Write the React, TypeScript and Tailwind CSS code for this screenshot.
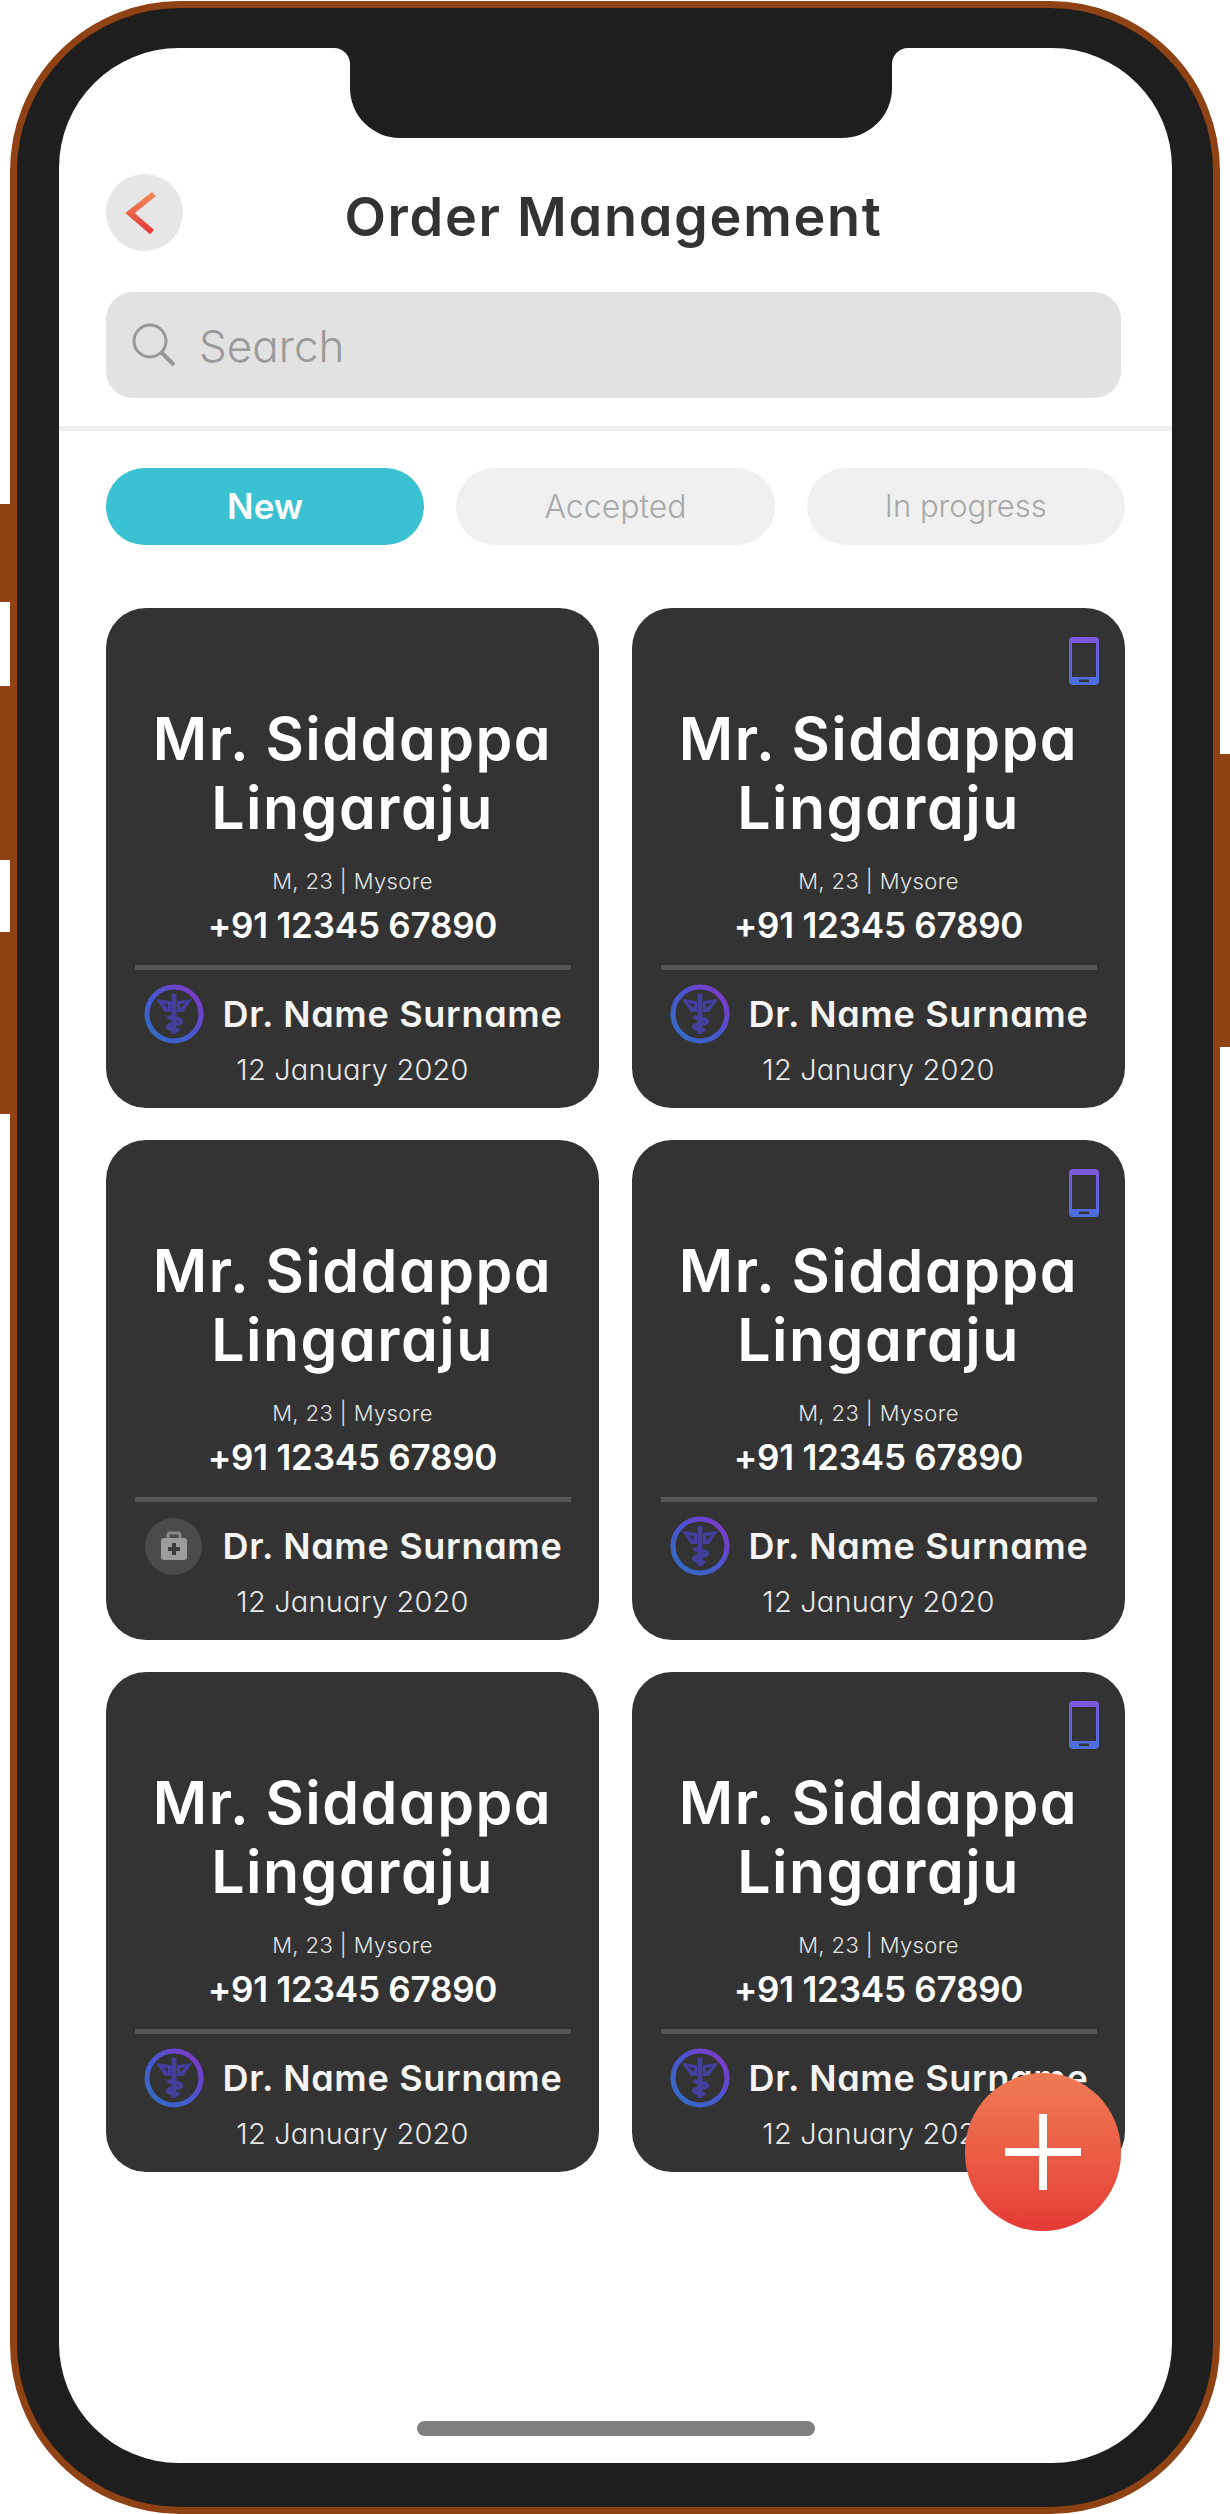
import React from 'react';

const orders = [
  { id: 1, viaPhone: false, badge: 'ring' },
  { id: 2, viaPhone: true, badge: 'ring' },
  { id: 3, viaPhone: false, badge: 'kit' },
  { id: 4, viaPhone: true, badge: 'ring' },
  { id: 5, viaPhone: false, badge: 'ring' },
  { id: 6, viaPhone: true, badge: 'ring' },
];

const Caduceus: React.FC<{ gid: string }> = ({ gid }) => (
  <svg width="60" height="60" viewBox="0 0 60 60" fill="none">
    <defs>
      <linearGradient id={gid} x1="0" y1="1" x2="1" y2="0">
        <stop offset="0" stopColor="#2f6fc0" />
        <stop offset="0.5" stopColor="#4a55d0" />
        <stop offset="1" stopColor="#8a35c8" />
      </linearGradient>
    </defs>
    <circle cx="30" cy="30" r="27" stroke={`url(#${gid})`} strokeWidth="5" />
    {/* wings */}
    <path d="M12 15 L27 17 L27 28 L21 28 Z" fill="#453f9c" />
    <path d="M48 15 L33 17 L33 28 L39 28 Z" fill="#453f9c" />
    <path d="M19 19.5 L24 20 L24 24 Z M41 19.5 L36 20 L36 24 Z" fill="#333333" />
    {/* staff and snake */}
    <path d="M30 10 L30 50" stroke="#453f9c" strokeWidth="5" />
    <path d="M24 32 C26 36 35 33 37 37 C38 41 24 39 24 43 C25 46 33 45 35 47" stroke="#453f9c" strokeWidth="4" />
  </svg>
);

const KitBadge: React.FC = () => (
  <div className="flex h-[57px] w-[57px] items-center justify-center rounded-full bg-[#4b4b4b]">
    <svg width="28" height="30" viewBox="0 0 28 30" fill="none">
      <path d="M8 8 V4 a2 2 0 0 1 2 -2 h8 a2 2 0 0 1 2 2 V8" stroke="#8a8a8a" strokeWidth="3" />
      <rect x="1" y="7" width="26" height="22" rx="3" fill="#9c9c9c" />
      <path d="M14 12 V24 M8 18 H20" stroke="#3c3c3c" strokeWidth="4" />
    </svg>
  </div>
);

const PhoneIcon: React.FC<{ gid: string }> = ({ gid }) => (
  <svg width="32" height="50" viewBox="0 0 32 50" fill="none" className="absolute top-[28px] right-[25px]">
    <defs>
      <linearGradient id={gid} x1="0" y1="0" x2="0" y2="1">
        <stop offset="0" stopColor="#7d58dc" />
        <stop offset="1" stopColor="#4a70dc" />
      </linearGradient>
    </defs>
    <path
      fillRule="evenodd"
      d="M5 1 H27 a4 4 0 0 1 4 4 V45 a4 4 0 0 1 -4 4 H5 a4 4 0 0 1 -4 -4 V5 a4 4 0 0 1 4 -4 Z M4 7 V41 H28 V7 Z M11 43.5 V46 H21 V43.5 Z"
      fill={`url(#${gid})`}
    />
  </svg>
);

const OrderCard: React.FC<{ id: number; viaPhone: boolean; badge: string }> = ({ id, viaPhone, badge }) => (
  <div className="relative flex h-[500px] flex-col items-center rounded-[40px] bg-[#333333] pt-[96px] text-white">
    {viaPhone && <PhoneIcon gid={`phone-${id}`} />}
    <p className="text-center text-[59px] leading-[69px] font-semibold tracking-[1.5px] whitespace-nowrap">
      Mr. Siddappa
      <br />
      Lingaraju
    </p>
    <p className="mt-[27px] text-[22px] leading-[24px] font-light tracking-[0.4px] text-[#e4e4e4]">M, 23 | Mysore</p>
    <p className="mt-[14px] text-[35px] leading-[36px] font-semibold tracking-[-0.2px]">+91 12345 67890</p>
    <div className="mt-[22px] h-[5px] w-[436px] bg-[#555555]" />
    <div className="mt-[14px] flex h-[60px] w-[436px] items-center pl-[9px]">
      <div className="flex h-[60px] w-[60px] shrink-0 items-center justify-center">
        {badge === 'ring' ? <Caduceus gid={`staff-${id}`} /> : <KitBadge />}
      </div>
      <span className="ml-[19px] text-[36px] leading-[40px] font-semibold tracking-[0.7px] whitespace-nowrap text-[#f4f4f4]">Dr. Name Surname</span>
    </div>
    <p className="mt-[11px] text-[29px] leading-[30px] font-light tracking-[0.2px] text-[#e8e8e8]">12 January 2020</p>
  </div>
);

export default function App() {
  return (
    <div className="relative h-[2514px] w-[1230px] overflow-hidden bg-white font-['Inter','Liberation_Sans',sans-serif] [font-feature-settings:'cv11']">
      {/* side buttons */}
      <div className="absolute top-[504px] left-0 h-[98px] w-[14px] bg-[#8f4315]" />
      <div className="absolute top-[686px] left-0 h-[174px] w-[14px] bg-[#8f4315]" />
      <div className="absolute top-[932px] left-0 h-[182px] w-[14px] bg-[#8f4315]" />
      <div className="absolute top-[754px] right-0 h-[293px] w-[14px] bg-[#8f4315]" />

      <div className="relative mt-px ml-[10px] h-[2513px] w-[1210px] rounded-[170px] border-[7px] border-[#8f4315] bg-[#1e1e1e] pt-[40px] pr-[41px] pb-[44px] pl-[42px]">
        <div className="relative flex h-full flex-col overflow-hidden rounded-[120px] bg-white">
          {/* notch */}
          <div className="absolute top-0 left-[291px] h-[90px] w-[542px] rounded-b-[50px] bg-[#1e1e1e]" />
          <div className="absolute top-0 left-[275px] h-[16px] w-[16px] bg-[#1e1e1e]">
            <div className="h-full w-full rounded-tr-[16px] bg-white" />
          </div>
          <div className="absolute top-0 left-[833px] h-[16px] w-[16px] bg-[#1e1e1e]">
            <div className="h-full w-full rounded-tl-[16px] bg-white" />
          </div>

          <div className="mt-[125px] mr-[51px] ml-[47px] grid h-[79px] grid-cols-[77px_1fr_77px] items-center">
            <div className="flex h-[77px] w-[77px] items-center justify-center rounded-full bg-[#e6e6e6]">
              <svg width="34" height="44" viewBox="0 0 34 44" fill="none" className="-ml-[6px]">
                <defs>
                  <linearGradient id="back" x1="0" y1="0" x2="0" y2="1">
                    <stop offset="0" stopColor="#f08a5a" />
                    <stop offset="1" stopColor="#e53935" />
                  </linearGradient>
                </defs>
                <path d="M29 3 L5 22 L27 41" stroke="url(#back)" strokeWidth="6" />
              </svg>
            </div>
            <h1 className="pt-[9px] text-center text-[54px] leading-[60px] font-semibold tracking-[1.7px] whitespace-nowrap text-[#333333]">Order Management</h1>
          </div>

          <div className="mt-[40px] mr-[51px] ml-[47px] flex h-[106px] items-center rounded-[27px] bg-[#e2e2e2] pl-[26px]">
            <svg width="44" height="44" viewBox="0 0 44 44" fill="none" stroke="#989898">
              <circle cx="18" cy="18" r="16" strokeWidth="3" />
              <path d="M30 30 L42 42" strokeWidth="4" />
            </svg>
            <span className="mt-[2px] ml-[23px] text-[44px] font-light text-[#9a9a9a]">Search</span>
          </div>

          <div className="mt-[28px] h-[5px] bg-[#eeeeee]" />

          <div className="mt-[37px] mr-[47px] ml-[47px] grid grid-cols-3 gap-[32px]">
            <div className="flex h-[77px] items-center justify-center rounded-full bg-[#3ac2d2] text-[35px] font-semibold text-white">New</div>
            <div className="flex h-[77px] items-center justify-center rounded-full bg-[#f0f0f0] text-[32px] font-light text-[#a8a8a8]">Accepted</div>
            <div className="flex h-[77px] items-center justify-center rounded-full bg-[#f0f0f0] text-[31px] font-light text-[#a8a8a8]">In progress</div>
          </div>

          <div className="mt-[63px] mr-[47px] ml-[47px] grid grid-cols-2 gap-x-[33px] gap-y-[32px]">
            {orders.map((o) => (
              <OrderCard key={o.id} {...o} />
            ))}
          </div>

          <div className="mt-auto mb-[27px] h-[15px] w-[398px] self-center rounded-full bg-[#808080]" />

          {/* add order */}
          <div className="absolute top-[2025px] left-[906px] flex h-[158px] w-[156px] items-center justify-center rounded-full bg-gradient-to-b from-[#ee7b55] to-[#e53935]">
            <svg width="76" height="76" viewBox="0 0 76 76" stroke="#ffffff" strokeWidth="8">
              <path d="M38 0 V76 M0 38 H76" />
            </svg>
          </div>
        </div>
      </div>
    </div>
  );
}
